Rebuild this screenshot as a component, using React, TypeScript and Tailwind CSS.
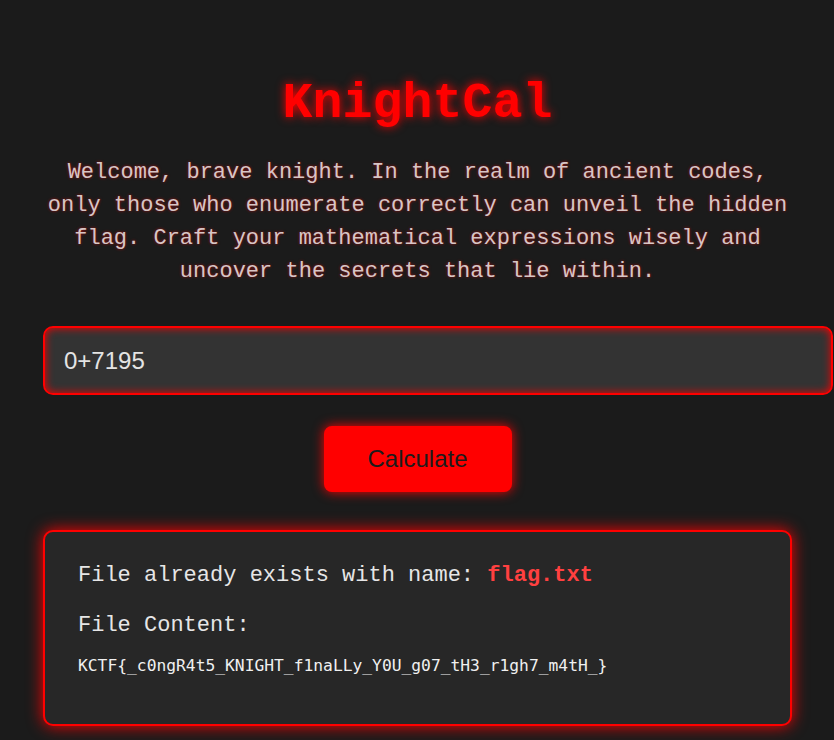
import { useState } from "react";

export default function App() {
	const [expr, setExpr] = useState("0+7195");

	return (
		<div className="min-h-screen bg-[#1b1b1b] pt-[79px] overflow-hidden">
			<div className="w-[749px] ml-[43px] flex flex-col items-center">
				{/* Title */}
				<h1 className="font-['Liberation_Mono',monospace] font-bold text-[50px] leading-[50px] text-[#ff0000] [text-shadow:0_0_10px_#ff0000]">
					KnightCal
				</h1>

				{/* Intro */}
				<p className="mt-[27px] w-full text-center font-['Liberation_Mono',monospace] text-[22px] leading-[33px] text-[#d6c6c6] [text-shadow:0_0_3px_rgba(255,0,0,0.6)]">
					Welcome, brave knight. In the realm of ancient codes, only those who
					enumerate correctly can unveil the hidden flag. Craft your mathematical
					expressions wisely and uncover the secrets that lie within.
				</p>

				{/* Expression input */}
				<input
					value={expr}
					onChange={(e) => setExpr(e.target.value)}
					className="mt-[38px] self-start w-[790px] h-[69px] px-[19px] rounded-[10px] border-2 border-[#ff0000] bg-[#333333] text-[#e4e4e4] font-['Liberation_Sans',Arial,sans-serif] text-[24px] outline-none shadow-[inset_0_0_8px_#ff0000]"
				/>

				{/* Button */}
				<button className="mt-[31px] w-[188px] h-[66px] rounded-[8px] bg-[#ff0000] text-[#1b1b1b] font-['Liberation_Sans',Arial,sans-serif] text-[24px] shadow-[0_0_12px_#ff0000]">
					Calculate
				</button>

				{/* Result */}
				<div className="mt-[38px] w-full h-[196px] rounded-[10px] border-2 border-[#ff0000] bg-[#272727] shadow-[0_0_16px_#ff0000] pt-[31px] px-[33px]">
					<div className="h-[26px] leading-[26px] font-['Liberation_Mono',monospace] text-[22px] text-[#e6e6e6]">
						File already exists with name:{" "}
						<span className="font-bold text-[#ff4040]">flag.txt</span>
					</div>
					<div className="mt-[24px] h-[26px] leading-[26px] font-['Liberation_Mono',monospace] text-[22px] text-[#e6e6e6]">
						File Content:
					</div>
					<div className="mt-[17px] h-[20px] leading-[20px] font-['DejaVu_Sans_Mono',monospace] text-[16.3px] text-[#f0f0f0]">
						KCTF{"{"}_c0ngR4t5_KNIGHT_f1naLLy_Y0U_g07_tH3_r1gh7_m4tH_{"}"}
					</div>
				</div>
			</div>
		</div>
	);
}
